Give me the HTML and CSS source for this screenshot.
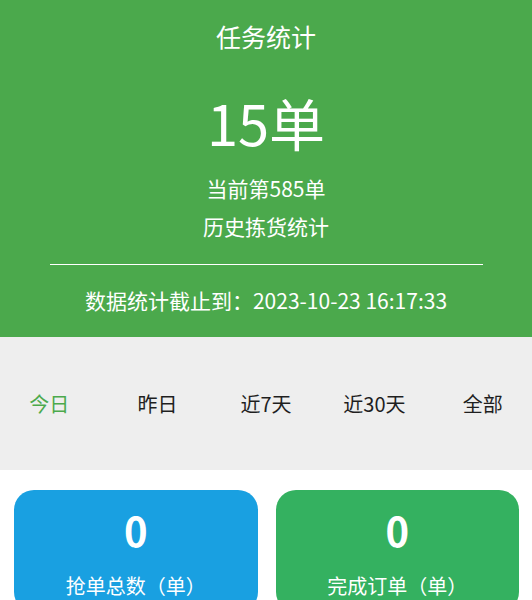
FILE: index.html
```html
<!DOCTYPE html>
<html lang="zh-CN">
<head>
<meta charset="utf-8">
<title>任务统计</title>
<link rel="stylesheet" href="styles.css">
</head>
<body>
<div class="page">
  <header class="hero">
    <div class="hero-title">任务统计</div>
    <div class="hero-count">15单</div>
    <div class="hero-sub">当前第585单</div>
    <div class="hero-sub">历史拣货统计</div>
    <div class="hero-rule"></div>
    <div class="hero-date">数据统计截止到：2023-10-23 16:17:33</div>
  </header>
  <nav class="tabs">
    <div class="tab active">今日</div>
    <div class="tab">昨日</div>
    <div class="tab">近7天</div>
    <div class="tab">近30天</div>
    <div class="tab">全部</div>
  </nav>
  <section class="cards">
    <div class="card card-blue">
      <div class="card-num">0</div>
      <div class="card-label">抢单总数（单）</div>
    </div>
    <div class="card card-green">
      <div class="card-num">0</div>
      <div class="card-label">完成订单（单）</div>
    </div>
  </section>
</div>
</body>
</html>
```
FILE: styles.css
```css
* { box-sizing: border-box; }
html, body {
  margin: 0;
  padding: 0;
  background: #ffffff;
}
body {
  font-family: "Noto Sans CJK SC", "Noto Sans", sans-serif;
  color: #222;
  overflow: hidden;
}
.page {
  width: 532px;
}
.hero {
  background: #4ba94c;
  color: #ffffff;
  text-align: center;
  padding: 18px 0 18px;
  display: flex;
  flex-direction: column;
}
.hero-title {
  font-size: 25px;
  line-height: 36px;
}
.hero-count {
  font-size: 56px;
  line-height: 70px;
  margin-top: 33px;
}
.hero-sub {
  font-size: 21px;
  line-height: 38px;
}
.hero-count + .hero-sub {
  margin-top: 12px;
}
.hero-rule {
  height: 1px;
  background: #ffffff;
  margin: 19px 49px 0 50px;
}
.hero-date {
  font-size: 21px;
  line-height: 38px;
  margin-top: 16px;
}
.tabs {
  background: #eeeeee;
  height: 133px;
  display: flex;
  align-items: center;
  margin: 0 -5px;
  padding: 0;
}
.tab {
  flex: 1;
  text-align: center;
  font-size: 20px;
  line-height: 30px;
  color: #1f1f1f;
}
.tab.active {
  color: #4ba94c;
}
.cards {
  display: flex;
  gap: 18px;
  padding: 20px 13px 0 14px;
}
.card {
  flex: 1;
  border-radius: 20px;
  color: #ffffff;
  text-align: center;
  padding: 10px 0 14px;
}
.card-blue { background: #19a0e1; }
.card-green { background: #34b160; }
.card-num {
  font-size: 40px;
  font-weight: 700;
  line-height: 60px;
}
.card-label {
  font-size: 20px;
  line-height: 24px;
  margin-top: 14px;
}
```
